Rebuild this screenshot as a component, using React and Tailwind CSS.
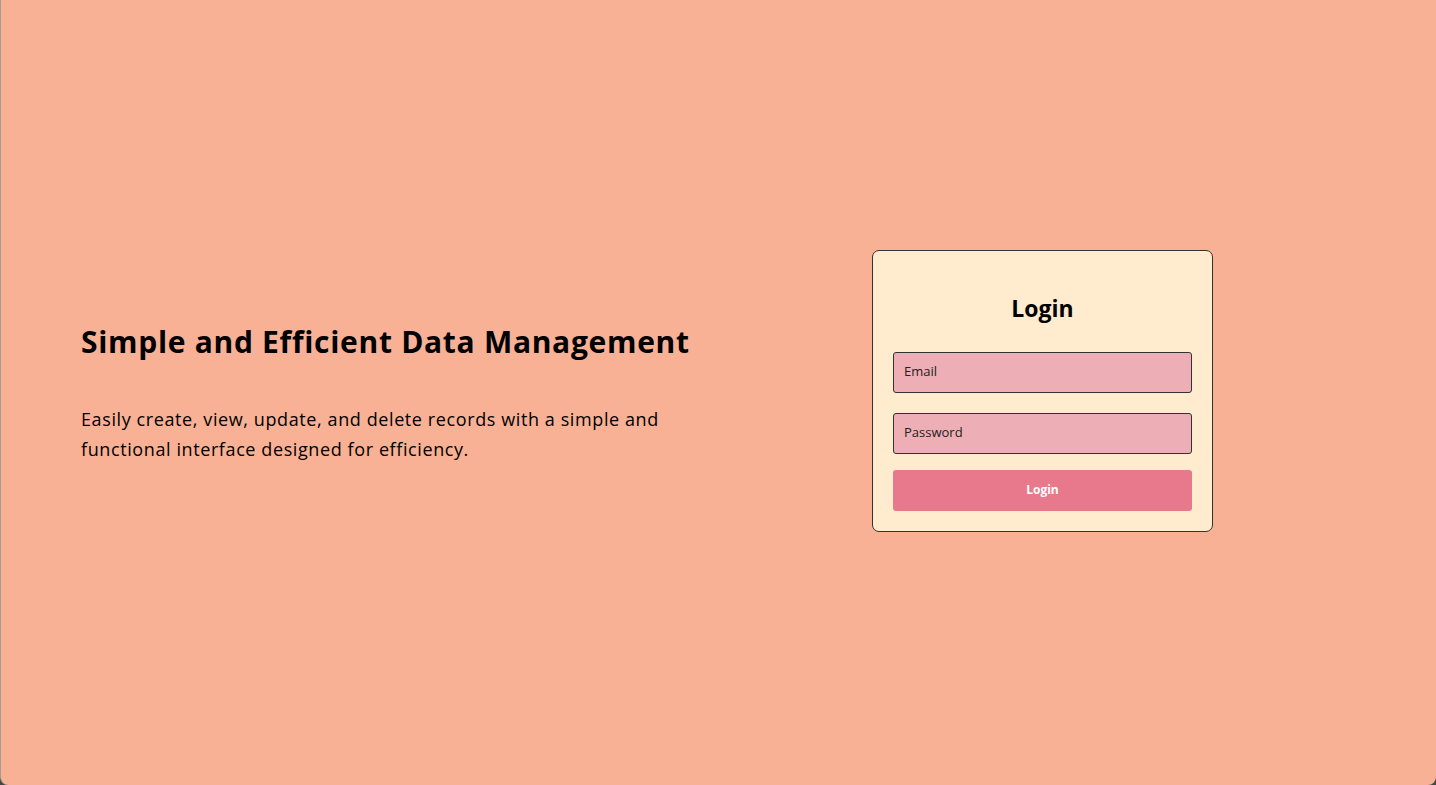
export default function App() {
  const font = { fontFamily: '"Open Sans", "DejaVu Sans", sans-serif' };
  return (
    <div className="h-[785px] w-[1436px] bg-[#3f4a4a] overflow-hidden" style={font}>
      <div className="h-full w-full bg-[#f8b195] rounded-b-[8px] border-l border-[#a89a94] flex items-center pl-[80px] pr-[223px] justify-between">
        <div className="w-[660px] text-black">
          <h1 className="text-[30px] leading-[40px] font-bold tracking-[0.7px]">Simple and Efficient Data Management</h1>
          <p className="mt-[42px] text-[18px] leading-[30px] tracking-[0.6px]">
            Easily create, view, update, and delete records with a simple and
            <br />
            functional interface designed for efficiency.
          </p>
        </div>
        <div className="w-[341px] mb-[4px] bg-[#ffebcd] border border-[#333333] rounded-[7px] p-5 flex flex-col">
          <h2 className="mt-[21px] mb-[28px] text-center text-[23px] leading-8 font-bold text-black">Login</h2>
          <div className="h-[41px] bg-[#edafb5] border border-[#333333] rounded-[3px] flex items-center px-[10px] text-[13px] text-[#222]">Email</div>
          <div className="mt-5 h-[41px] bg-[#edafb5] border border-[#333333] rounded-[3px] flex items-center px-[10px] text-[13px] text-[#222]">Password</div>
          <button className="mt-4 h-[41px] bg-[#e8798c] rounded-[3px] text-white text-[12px] font-bold">Login</button>
        </div>
      </div>
    </div>
  );
}
